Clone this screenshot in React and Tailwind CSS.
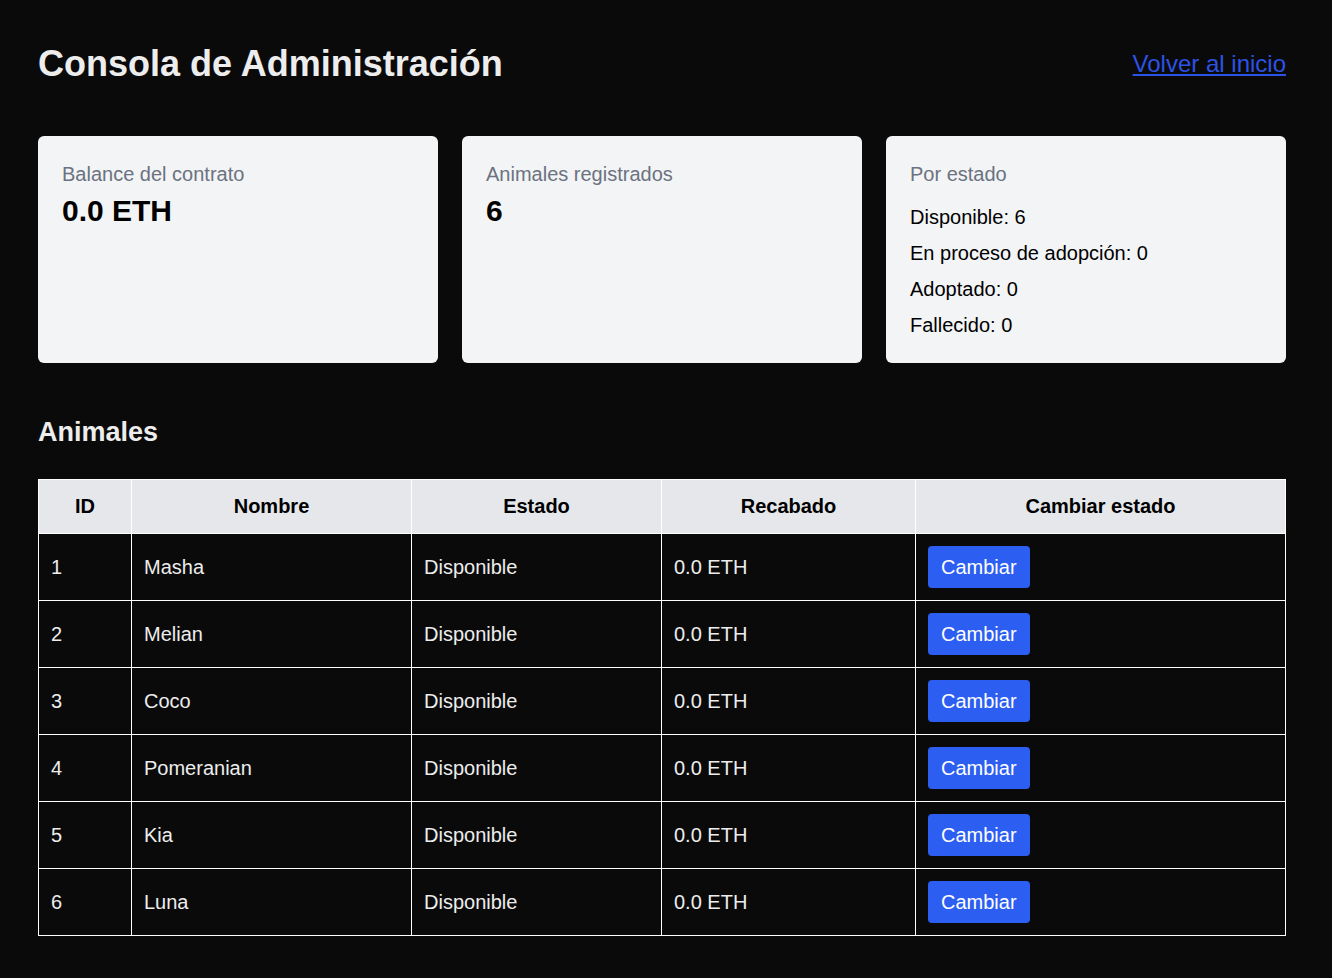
const ANIMALS = [
  { id: 1, name: 'Masha' },
  { id: 2, name: 'Melian' },
  { id: 3, name: 'Coco' },
  { id: 4, name: 'Pomeranian' },
  { id: 5, name: 'Kia' },
  { id: 6, name: 'Luna' },
]

function StatCard({ label, children }) {
  return (
    <div className="bg-[#f3f4f6] rounded-md p-6">
      <p className="text-xl leading-7 text-[#6b7280]">{label}</p>
      {children}
    </div>
  )
}

export default function App() {
  return (
    <div className="min-h-[978px] bg-[#0a0a0a] text-[#ededed] pl-[38px] pr-[46px] pt-[44px] pb-10 font-['Liberation_Sans',Arial,sans-serif]">
      <header className="flex items-center justify-between">
        <h1 className="text-4xl leading-10 font-bold text-[#ededed]">Consola de Administración</h1>
        <a href="#" className="text-2xl leading-8 text-[#2d52e6] underline">Volver al inicio</a>
      </header>

      <section className="grid grid-cols-3 gap-6 mt-[52px]">
        <StatCard label="Balance del contrato">
          <p className="text-3xl leading-9 font-bold text-black mt-[5px]">0.0 ETH</p>
        </StatCard>
        <StatCard label="Animales registrados">
          <p className="text-3xl leading-9 font-bold text-black mt-[5px]">6</p>
        </StatCard>
        <StatCard label="Por estado">
          <ul className="mt-[15px] space-y-2 text-xl leading-7 text-black">
            <li>Disponible: 6</li>
            <li>En proceso de adopción: 0</li>
            <li>Adoptado: 0</li>
            <li>Fallecido: 0</li>
          </ul>
        </StatCard>
      </section>

      <h2 className="text-[27px] leading-9 font-bold mt-[51px]">Animales</h2>

      <table className="w-full table-fixed border-collapse mt-[29px] text-xl leading-7">
        <thead>
          <tr className="bg-[#e5e7eb] text-black">
            <th className="w-[93px] border border-white px-3 pt-3 pb-[13px] font-bold">ID</th>
            <th className="w-[280px] border border-white px-3 pt-3 pb-[13px] font-bold">Nombre</th>
            <th className="w-[250px] border border-white px-3 pt-3 pb-[13px] font-bold">Estado</th>
            <th className="w-[254px] border border-white px-3 pt-3 pb-[13px] font-bold">Recabado</th>
            <th className="border border-white px-3 pt-3 pb-[13px] font-bold">Cambiar estado</th>
          </tr>
        </thead>
        <tbody>
          {ANIMALS.map((a) => (
            <tr key={a.id}>
              <td className="border border-white p-3">{a.id}</td>
              <td className="border border-white p-3">{a.name}</td>
              <td className="border border-white p-3">Disponible</td>
              <td className="border border-white p-3">0.0 ETH</td>
              <td className="border border-white p-3">
                <button className="bg-[#2d5ef2] text-white rounded px-[13px] py-[7px] leading-7 align-middle">Cambiar</button>
              </td>
            </tr>
          ))}
        </tbody>
      </table>
    </div>
  )
}
